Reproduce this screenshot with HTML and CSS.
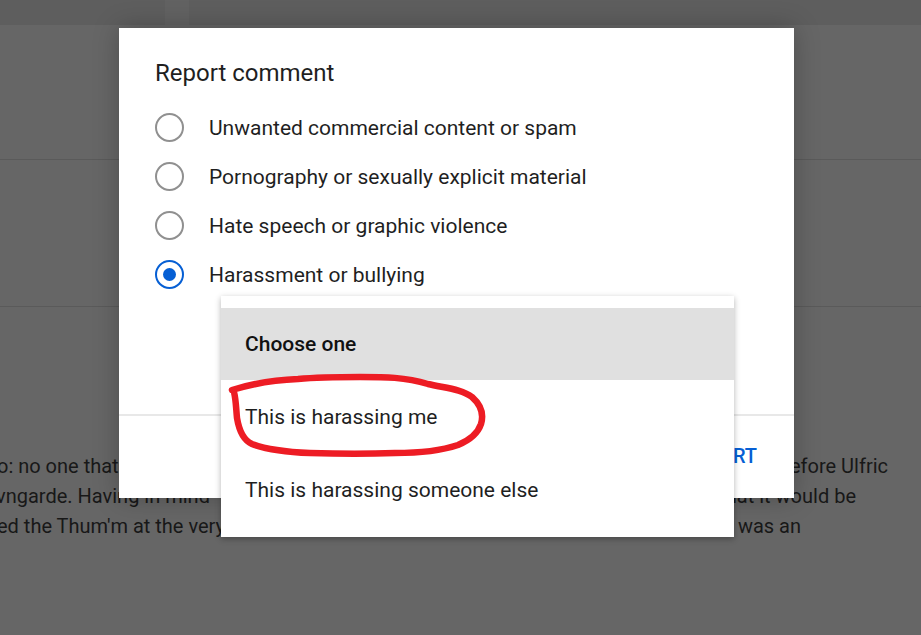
FILE: index.html
```html
<!DOCTYPE html>
<html lang="en">
<head>
    <meta charset="UTF-8">
    <meta name="viewport" content="width=device-width, initial-scale=1.0">
    <title>Report comment</title>
    <link rel="stylesheet" href="styles.css">
</head>
<body>
    <div class="page">
        <div class="masthead"><div class="tab"></div></div>
        <div class="band band-top"></div>
        <div class="band band-mid"></div>
        <div class="comments">
            <div class="line l1">
                <span>o: no one that</span>
                <span>before Ulfric</span>
            </div>
            <div class="line l2">
                <span>vngarde. Having in mind</span>
                <span>that it would be</span>
            </div>
            <div class="line l3">
                <span>ed the Thum'm at the very beginning</span>
                <span>was an</span>
            </div>
        </div>
    </div>

    <!-- report dialog -->
    <div class="dialog">
        <h2 class="dialog-title">Report comment</h2>
        <div class="options">
            <label class="option"><span class="radio"></span>Unwanted commercial content or spam</label>
            <label class="option"><span class="radio"></span>Pornography or sexually explicit material</label>
            <label class="option"><span class="radio"></span>Hate speech or graphic violence</label>
            <label class="option"><span class="radio checked"></span>Harassment or bullying</label>
        </div>
        <div class="dialog-footer">
            <button class="text-btn">CANCEL</button>
            <button class="text-btn">REPORT</button>
        </div>
    </div>

    <div class="menu">
        <div class="menu-item selected">Choose one</div>
        <div class="menu-item">This is harassing me</div>
        <div class="menu-item">This is harassing someone else</div>
    </div>

    <svg class="scribble" width="921" height="635" viewBox="0 0 921 635">
        <path d="M232 390 C245 386 270 380 298 379 C320 377 340 377 360 377 C385 377 405 377 428 384 C445 388 462 389 472 397 C481 405 484 414 481 424 C478 433 470 440 458 445 C440 451 420 453 395 453 C370 454 340 454 310 453 C285 452 265 449 252 444 C243 440 239 430 237 418 C236 408 236 400 234 392"
              fill="none" stroke="#ed1c24" stroke-width="6.5" stroke-linecap="round" stroke-linejoin="round"/>
    </svg>
</body>
</html>
```

FILE: styles.css
```css
body {
    margin: 0;
    background-color: #666666;
    font-family: Roboto, 'Noto Sans', sans-serif;
    overflow: hidden;
    width: 921px;
    height: 635px;
}
.page {
    width: 921px;
}
.masthead {
    height: 25px;
    background-color: #5e5e5e;
    display: flex;
}
.masthead .tab {
    margin-left: 165px;
    width: 24px;
    background-color: #626262;
}
.band {
    border-bottom: 1px solid #5a5a5a;
}
.band-top {
    height: 134px;
}
.band-mid {
    height: 146px;
}
.comments {
    padding-top: 144px;
    font-size: 20px;
    line-height: 30px;
    color: #181818;
}
.line {
    display: flex;
    justify-content: space-between;
    white-space: nowrap;
    margin-left: -3px;
}
.l1 { width: 891px; }
.l2 { width: 860px; margin-left: -4px; }
.l3 { width: 804px; }

.dialog {
    position: absolute;
    left: 119px;
    top: 28px;
    width: 675px;
    height: 470px;
    background-color: #ffffff;
    box-shadow: 0 0 24px rgba(0, 0, 0, 0.25);
    display: flex;
    flex-direction: column;
}
.dialog-title {
    margin: 0;
    padding: 29px 36px 0;
    font-size: 24px;
    font-weight: 400;
    line-height: 32px;
    color: #1f1f1f;
}
.options {
    padding: 14px 36px 0;
    display: flex;
    flex-direction: column;
}
.option {
    display: flex;
    align-items: center;
    height: 49px;
    font-size: 21px;
    color: #1f1f1f;
}
.radio {
    width: 25px;
    height: 25px;
    border: 2.5px solid #909090;
    border-radius: 50%;
    margin-right: 25px;
    position: relative;
    flex-shrink: 0;
}
.radio.checked {
    border-color: #065fd4;
}
.radio.checked::after {
    content: "";
    position: absolute;
    left: 6px;
    top: 6px;
    width: 13px;
    height: 13px;
    border-radius: 50%;
    background-color: #065fd4;
}
.dialog-footer {
    margin-top: auto;
    height: 84px;
    border-top: 2px solid #e8e8e8;
    display: flex;
    justify-content: flex-end;
    align-items: center;
    padding: 0 30px 0 0;
    gap: 10px;
    box-sizing: border-box;
}
.text-btn {
    background: none;
    border: none;
    font-family: Roboto, sans-serif;
    font-size: 20px;
    font-weight: 500;
    color: #065fd4;
    padding: 0 7px;
    margin-bottom: 2px;
}

.menu {
    position: absolute;
    left: 221px;
    top: 296px;
    width: 513px;
    padding: 12px 0 11px;
    background-color: #ffffff;
    box-shadow: 0 2px 6px rgba(0, 0, 0, 0.3);
}
.menu-item {
    height: 72px;
    display: flex;
    align-items: center;
    padding: 0 24px;
    font-size: 21px;
    color: #1f1f1f;
}
.menu-item + .menu-item {
    height: 73px;
}
.menu-item.selected {
    background-color: #e0e0e0;
    font-weight: 500;
    color: #111111;
}

.scribble {
    position: absolute;
    left: 0;
    top: 0;
    pointer-events: none;
}
```
